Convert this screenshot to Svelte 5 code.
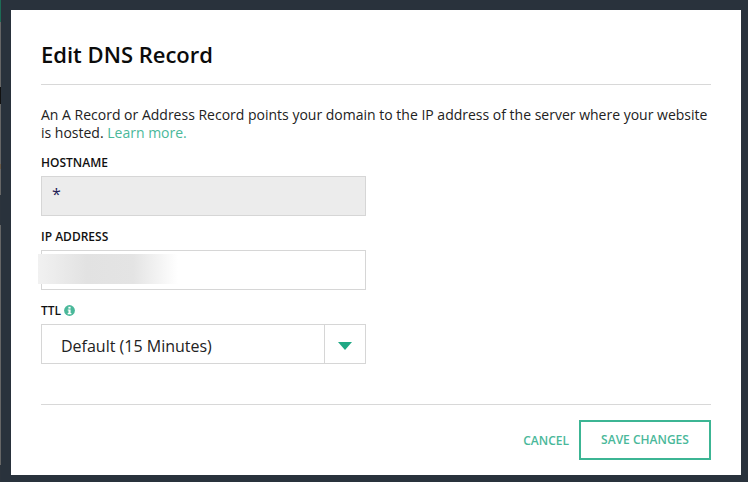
<script>
	let hostname = '*';
	let ttl = 'Default (15 Minutes)';
</script>

<div class="backdrop">
	<div class="edge"></div>
	<div class="modal">
		<h2>Edit DNS Record</h2>
		<p class="intro">
			An A Record or Address Record points your domain to the IP address of the server where your website is hosted.
			<a href="#learn">Learn more.</a>
		</p>

		<div class="field">
			<div class="label">HOSTNAME</div>
			<div class="input readonly"><span class="star">{hostname}</span></div>
		</div>

		<div class="field">
			<div class="label">IP ADDRESS</div>
			<div class="input ip"><div class="smudge"></div></div>
		</div>

		<div class="field">
			<div class="label">
				TTL
				<svg class="info" width="11" height="11" viewBox="0 0 11 11">
					<circle cx="5.5" cy="5.5" r="5.4" fill="#4ab89a" />
					<rect x="4.4" y="1.800" width="2.200" height="1.800" fill="#fff" />
					<path d="M3.700 4.400h2.900v3.600h.8v1.200H3.700V8h.8V5.600h-.8z" fill="#fff" />
				</svg>
			</div>
			<div class="select">
				<span class="value">{ttl}</span>
				<span class="arrow">
					<svg width="14" height="8" viewBox="0 0 14 8"><path d="M0 0h14L7 8z" fill="#1fa884" /></svg>
				</span>
			</div>
		</div>

		<div class="footer">
			<a class="cancel" href="#cancel">CANCEL</a>
			<button class="save">SAVE CHANGES</button>
		</div>
	</div>
</div>

<style>
	:global(body) {
		background: #29323c;
		font-family: "Open Sans", sans-serif;
	}

	.backdrop {
		position: relative;
		height: 482px;
		padding: 10px 7px 7px 11px;
		box-sizing: border-box;
		background: #29323c;
		overflow: hidden;
	}

	/* sliver of the page behind the overlay */
	.edge {
		position: absolute;
		left: 0;
		top: 0;
		width: 1px;
		height: 482px;
		background: linear-gradient(#1d6b55 0 22px, #666 22px 87px, #111 87px 104px, #666 104px 164px, #6b5a45 164px 169px, #666 169px 195px, #2b333c 195px 225px, #666 225px 465px, #2b333c 465px);
	}

	.modal {
		background: #fff;
		height: 465px;
		padding: 29px 30px 30px;
		box-sizing: border-box;
		color: #111;
	}

	h2 {
		margin: 0;
		height: 45px;
		font-size: 22px;
		line-height: 30px;
		font-weight: 600;
		color: #0b0b0b;
		border-bottom: 1px solid #d8d8d8;
	}

	.intro {
		margin: 21px 0 0;
		font-size: 14px;
		line-height: 18px;
		color: #222;
	}

	.intro a {
		color: #4ab89a;
		text-decoration: none;
	}

	.field {
		margin-top: 10px;
	}

	.label {
		display: flex;
		align-items: center;
		gap: 3px;
		height: 20px;
		box-sizing: border-box;
		padding-top: 2px;
		margin-bottom: 4px;
		font-size: 12px;
		line-height: 18px;
		font-weight: 600;
		color: #111;
	}

	.info {
		margin-top: -2px;
	}

	.input, .select {
		position: relative;
		display: flex;
		align-items: center;
		width: 325px;
		height: 40px;
		box-sizing: border-box;
		border: 1px solid #d6d6d6;
		font-size: 16px;
		color: #222;
	}

	.readonly {
		background: #ececec;
		padding: 0 0 4px 10px;
	}

	.star {
		color: #222055;
	}

	.smudge {
		position: absolute;
		left: -4px;
		top: 3px;
		width: 140px;
		height: 30px;
		background: linear-gradient(90deg, #f1f1f1, #e2e2e2 35%, #e4e4e4 68%, #fff 100%);
	}

	.value {
		flex: 1;
		padding: 4px 0 0 19px;
	}

	.arrow {
		display: flex;
		align-items: center;
		justify-content: center;
		width: 41px;
		height: 100%;
		padding-top: 4px;
		box-sizing: border-box;
		border-left: 1px solid #d6d6d6;
	}

	.footer {
		display: flex;
		justify-content: flex-end;
		align-items: center;
		gap: 10px;
		margin-top: 40px;
		padding-top: 15px;
		border-top: 1px solid #d8d8d8;
	}

	.cancel {
		color: #4ab89a;
		font-size: 12px;
		font-weight: 600;
		text-decoration: none;
	}

	.save {
		width: 132px;
		height: 40px;
		background: #fff;
		border: 2px solid #3cb594;
		color: #4ab89a;
		font-family: inherit;
		font-size: 12px;
		font-weight: 600;
		padding: 0 0 2px;
	}
</style>
